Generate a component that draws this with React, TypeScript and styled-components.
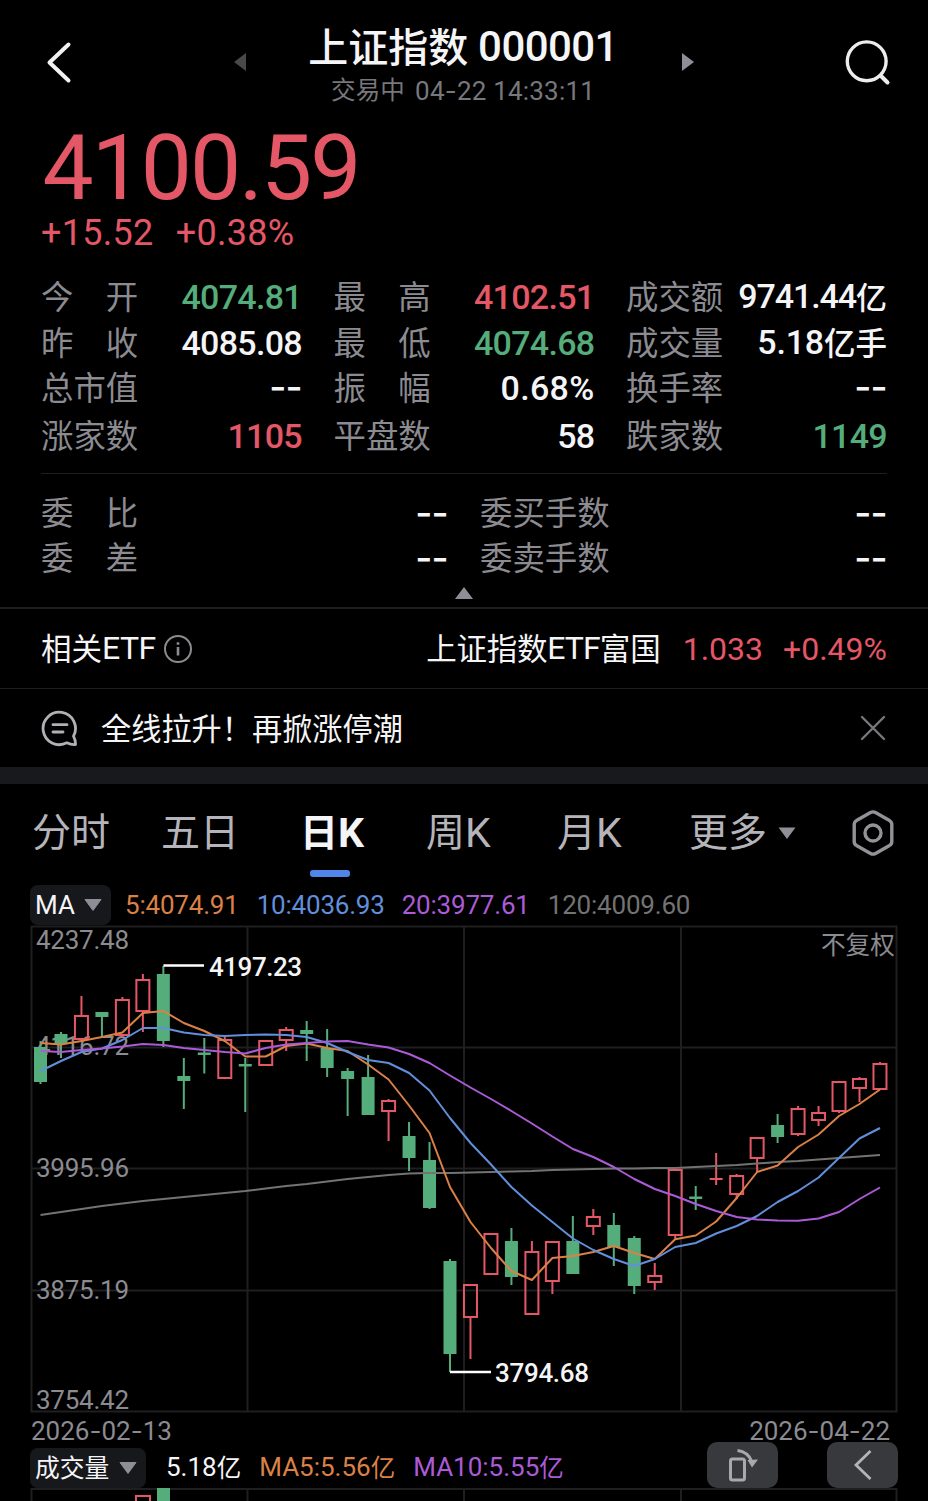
import React from "react";
import styled, { createGlobalStyle } from "styled-components";

const c = {
  red: "#e45766",
  green: "#55ad7c",
  white: "#f5f5f7",
  label: "#8b8b91",
  dim: "#77777d",
  tab: "#b5b4bb",
  line: "#1e1e20",
  orange: "#db8146",
  blue: "#628fdc",
  purple: "#ac5bd8",
  grey: "#737373",
};

const GlobalStyle = createGlobalStyle`
  html, body { margin: 0; background: #000; }
  * { box-sizing: border-box; }
  svg { display: block; flex: none; }
`;

const fonts = `Roboto, "Noto Sans CJK SC", sans-serif`;

const Screen = styled.main`
  width: 928px;
  height: 1501px;
  overflow: hidden;
  background: #000;
  color: ${c.white};
  font-family: ${fonts};
  display: flex;
  flex-direction: column;
`;

const Txt = styled.span<{ $s: number; $c?: string; $w?: number; $ls?: number; $ml?: number }>`
  font-size: ${(p) => p.$s}px;
  color: ${(p) => p.$c ?? c.white};
  font-weight: ${(p) => p.$w ?? 400};
  letter-spacing: ${(p) => p.$ls ?? 0}px;
  margin-left: ${(p) => p.$ml ?? 0}px;
  white-space: pre;
`;

/* Latin hyphens are drawn wide, the way the numeric face has them */
const Dash = styled.span`
  font-family: Inter, sans-serif;
`;
const EmptyValue = styled.span`
  font-family: Inter, sans-serif;
  font-size: 37px;
  line-height: 40px;
  padding-bottom: 3px;
  display: inline-block;
`;

const Han = styled.span<{ $s: number; $ls?: number }>`
  font-size: ${(p) => p.$s}px;
  letter-spacing: ${(p) => p.$ls ?? 0}px;
  vertical-align: -1px;
`;

/* ---------- header ---------- */
const Header = styled.header`
  display: grid;
  grid-template-columns: 234px 12px 1fr 12px 234px;
  align-items: center;
  height: 124px;
  flex: none;
`;
const BackCell = styled.div`
  padding-left: 44px;
`;
const SearchCell = styled.div`
  display: flex;
  justify-content: flex-end;
  padding-right: 36px;
`;
const TitleBlock = styled.div`
  display: flex;
  flex-direction: column;
  align-items: center;
  padding: 7px 2px 0 0;
`;
const Title = styled.h1`
  margin: 0;
  font-size: 42px;
  line-height: 49px;
  letter-spacing: -0.6px;
  font-weight: 500;
  white-space: pre;
`;
const Subtitle = styled.div`
  display: flex;
  font-size: 26px;
  line-height: 36px;
  letter-spacing: 0.2px;
  color: ${c.dim};
  white-space: pre;
`;
const Session = styled.span`
  font-size: 24.5px;
  margin-right: 10px;
`;

/* ---------- price ---------- */
const Price = styled.section`
  height: 150px;
  padding-left: 41px;
  color: ${c.red};
  flex: none;
`;
const Last = styled.div`
  font-size: 91px;
  line-height: 88px;
  letter-spacing: -2px;
  margin-left: 1.5px;
`;
const Change = styled.div`
  display: flex;
  gap: 22px;
  font-size: 36px;
  line-height: 43px;
  letter-spacing: 0.3px;
`;

/* ---------- stats ---------- */
const Stats = styled.section`
  display: grid;
  grid-template-columns: repeat(3, 261px);
  grid-template-rows: 46px 46px 44px 52px;
  column-gap: 31.5px;
  margin: 0 41px;
  padding-bottom: 11px;
  border-bottom: 1px solid ${c.line};
  height: 200px;
  flex: none;
`;
const Orders = styled.section`
  display: grid;
  grid-template-columns: 1fr 1fr;
  grid-template-rows: 45px 45px;
  column-gap: 32px;
  margin: 17px 41px 0;
  flex: none;
`;
const Cell = styled.div`
  display: flex;
  justify-content: space-between;
  align-items: center;
  line-height: 44px;
`;
const Label = styled.span`
  font-size: 32.4px;
  padding-top: 1px;
  color: ${c.label};
  white-space: pre;
`;
const Value = styled.span<{ $tone: string; $ls?: number }>`
  font-size: 34px;
  font-weight: 500;
  letter-spacing: ${(p) => p.$ls ?? -0.7}px;
  color: ${(p) => p.$tone};
  white-space: pre;
`;
const Collapse = styled.div`
  display: flex;
  justify-content: center;
  height: 28px;
  padding-top: 6px;
  border-bottom: 2px solid ${c.line};
  flex: none;
`;

/* ---------- etf / news ---------- */
const Bar = styled.section<{ $h: number; $line?: boolean }>`
  display: flex;
  align-items: center;
  height: ${(p) => p.$h}px;
  padding: 0 41px;
  line-height: 40px;
  border-bottom: ${(p) => (p.$line ? `1px solid ${c.line}` : "0")};
  flex: none;
`;
const Headline = styled.span`
  margin-left: 23px;
  padding-top: 3px;
  font-size: 30.2px;
`;
const Grow = styled.div`
  flex: 1;
`;
const Band = styled.div`
  height: 17px;
  background: #18191d;
  flex: none;
`;

/* ---------- tabs ---------- */
const Tabs = styled.nav`
  display: grid;
  grid-template-columns: 129px 139px 126px 131px 132px 162px 46px;
  padding-left: 32px;
  height: 101px;
  flex: none;
`;
const Tab = styled.div<{ $on?: boolean }>`
  display: flex;
  align-items: center;
  height: 97px;
  font-size: 41px;
  line-height: 60px;
  color: ${(p) => (p.$on ? c.white : c.tab)};
  font-weight: ${(p) => (p.$on ? 700 : 400)};
  position: relative;
  white-space: pre;
`;
const Underline = styled.i`
  position: absolute;
  left: 10px;
  top: 86px;
  width: 40px;
  height: 7px;
  border-radius: 3px;
  background: #5086ea;
`;

/* ---------- indicator rows ---------- */
const Indicators = styled.div`
  display: flex;
  align-items: center;
  height: 40px;
  line-height: 40px;
  padding-left: 30px;
  flex: none;
`;
const Pill = styled.div<{ $w: number }>`
  display: flex;
  align-items: center;
  justify-content: space-between;
  width: ${(p) => p.$w}px;
  height: 40px;
  padding: 0 9px 0 5px;
  border-radius: 8px;
  background: #17181c;
`;
const Dates = styled.div`
  display: flex;
  justify-content: space-between;
  height: 35px;
  padding: 0 38px 0 31px;
  line-height: 35px;
  flex: none;
`;
const FloatButtons = styled.div`
  display: flex;
  gap: 49.5px;
  margin: -6px 30px 0 auto;
`;
const FloatButton = styled.button`
  display: flex;
  align-items: center;
  justify-content: center;
  width: 70.7px;
  height: 46px;
  padding: 0;
  border: 0;
  border-radius: 10px;
  background: #38393d;
`;

/* ---------- icons ---------- */
const Down = () => (
  <svg width="18" height="12" viewBox="0 0 18 12">
    <path d="M1 0.5H17L9 11.5Z" fill="#8f8e97" stroke="#8f8e97" strokeWidth="1" strokeLinejoin="round" />
  </svg>
);

/* ---------- chart data: [type, high, bodyTop, bodyBottom, low] ---------- */
type Candle = ["r" | "g", number, number, number, number];
const candles: Candle[] = [
  ["g", 1041, 1047, 1082, 1084],
  ["g", 1032, 1034, 1044, 1058],
  ["r", 996, 1015, 1040, 1042],
  ["g", 1012, 1012, 1017, 1037],
  ["r", 997, 999, 1036, 1037],
  ["r", 974, 979, 1012, 1032],
  ["g", 966, 974, 1041, 1047],
  ["g", 1058, 1076, 1081, 1109],
  ["g", 1038, 1052.5, 1055, 1073.5],
  ["r", 1037, 1039, 1079, 1079],
  ["g", 1058, 1064, 1066.5, 1112],
  ["r", 1040, 1040, 1066, 1066],
  ["r", 1027, 1029, 1041, 1051],
  ["g", 1021, 1030, 1034, 1061],
  ["g", 1029, 1048, 1068, 1077],
  ["g", 1068, 1071, 1079, 1116],
  ["g", 1055, 1077, 1115, 1115],
  ["r", 1099, 1100, 1112, 1141],
  ["g", 1122, 1136, 1158, 1171],
  ["g", 1142, 1160, 1208, 1209],
  ["g", 1259, 1261, 1354, 1372],
  ["r", 1284, 1284, 1318, 1359],
  ["r", 1233, 1233, 1275, 1275],
  ["g", 1228, 1241, 1277, 1285],
  ["r", 1241, 1251, 1315, 1315],
  ["r", 1241, 1241, 1282, 1294],
  ["g", 1216, 1241, 1274, 1274],
  ["r", 1209, 1216, 1227, 1235],
  ["g", 1213, 1225, 1247, 1266],
  ["g", 1236, 1238, 1286, 1294],
  ["r", 1263, 1275, 1283, 1290],
  ["r", 1169, 1169, 1236, 1240],
  ["g", 1186, 1196.5, 1199, 1210],
  ["r", 1153, 1178, 1180, 1185],
  ["r", 1174, 1175, 1195, 1199],
  ["r", 1137, 1137, 1159, 1172],
  ["g", 1114, 1125, 1137, 1143],
  ["r", 1106, 1108, 1135, 1136],
  ["r", 1106, 1112, 1121, 1126],
  ["r", 1081, 1081, 1112, 1113],
  ["r", 1077, 1078, 1089, 1102],
  ["r", 1062, 1063, 1090, 1090],
];
const ma5 = [1043, 1044.5, 1041, 1037, 1032.5, 1013, 1011, 1023, 1031, 1041, 1056.5, 1056.5, 1046, 1043.5, 1048, 1051, 1064.5, 1079.5, 1105.5, 1133, 1187, 1222, 1248, 1271, 1280, 1258, 1256, 1252, 1246, 1253, 1259, 1239.3, 1235.5, 1221.5, 1198, 1172, 1165.5, 1147, 1134.5, 1116, 1104, 1089.5];
const ma10 = [1071, 1061, 1052, 1048.5, 1040, 1028, 1028, 1032.5, 1035, 1036, 1035, 1034.5, 1035, 1037, 1043, 1052, 1060, 1063, 1073, 1090.5, 1118, 1143, 1164.5, 1187, 1205.5, 1222, 1238.5, 1250, 1259, 1266, 1259, 1247, 1243, 1233.5, 1226, 1216, 1202, 1191, 1177.5, 1158, 1138.5, 1128];
const ma20 = [1051, 1052, 1050, 1048.5, 1046.5, 1044, 1045, 1048, 1050, 1052, 1053.5, 1048, 1044.5, 1043, 1041.5, 1041, 1044.5, 1047.5, 1054, 1063, 1075.5, 1087.5, 1099, 1111, 1123.5, 1136.5, 1149, 1157, 1167, 1179, 1189, 1196, 1204, 1211, 1217, 1219.5, 1220.5, 1220.7, 1218.5, 1212, 1199, 1187.5];
const ma120 = [1215, 1212, 1209, 1206, 1203.5, 1201, 1199, 1197, 1195, 1193, 1191, 1188.5, 1186, 1184, 1181.5, 1179, 1177, 1175, 1173.5, 1173, 1173, 1172.5, 1172, 1171.5, 1171, 1170, 1169.5, 1169, 1168.5, 1168.5, 1168, 1168, 1167, 1166, 1165, 1163.5, 1162, 1161, 1159.5, 1158, 1156.5, 1155];

const cx = (i: number) => 40.5 + i * 20.475;
const points = (ys: number[]) => ys.map((y, i) => `${cx(i).toFixed(1)},${y}`).join(" ");

const Grid = styled.g`
  stroke: #1f1f21;
  stroke-width: 2;
  fill: none;
`;
const AxisText = styled.text`
  font: 400 26px ${fonts};
  fill: ${c.label};
`;
const AdjustText = styled.text`
  font: 400 24.6px ${fonts};
  fill: ${c.label};
`;
const MarkText = styled.text`
  font: 500 26px ${fonts};
  fill: ${c.white};
`;

const KChart = () => (
  <svg width="928" height="488" viewBox="0 925 928 488">
    <Grid>
      <path d="M31.5 926.5H896.5V1411.5H31.5Z" />
      <path d="M32 1047.5H896M32 1168.5H896M32 1290.5H896M247.5 926V1411M464 926V1411M681 926V1411" />
    </Grid>
    <AxisText x="36" y="949" textLength="93">4237.48</AxisText>
    <AxisText x="36" y="1055" textLength="93">4116.72</AxisText>
    <AxisText x="36" y="1177" textLength="93">3995.96</AxisText>
    <AxisText x="36" y="1299" textLength="93">3875.19</AxisText>
    <AxisText x="36" y="1409" textLength="93">3754.42</AxisText>
    <AdjustText x="821" y="954">不复权</AdjustText>
    {candles.map(([t, hi, top, bot, lo], i) => {
      const x = cx(i);
      const thin = bot - top < 3;
      if (t === "g" || thin) {
        const col = t === "g" ? c.green : c.red;
        return (
          <g key={i} fill={col}>
            <rect x={x - 1} y={hi} width="2" height={lo - hi} />
            <rect x={x - 6.5} y={top} width="13" height={bot - top} />
          </g>
        );
      }
      return (
        <g key={i} stroke={c.red} strokeWidth="2" fill="none">
          <path d={`M${x} ${hi}V${top}M${x} ${bot}V${lo}`} />
          <rect x={x - 6.5} y={top + 1} width="13" height={bot - top - 2} />
        </g>
      );
    })}
    <g fill="none" strokeWidth="2" strokeLinejoin="round">
      <polyline points={points(ma120)} stroke={c.grey} />
      <polyline points={points(ma5)} stroke={c.orange} />
      <polyline points={points(ma10)} stroke={c.blue} />
      <polyline points={points(ma20)} stroke={c.purple} />
    </g>
    <path d="M163.4 965.5H204M450 1372H491" stroke="#fff" strokeWidth="2.4" />
    <MarkText x="209" y="976" textLength="93">4197.23</MarkText>
    <MarkText x="495" y="1382" textLength="94">3794.68</MarkText>
  </svg>
);

const VolumeChart = () => (
  <svg width="928" height="13" viewBox="0 1488 928 13">
    <Grid>
      <path d="M31.5 1510V1489H896.5V1510M247.5 1488V1501M464 1488V1501M681 1488V1501" />
    </Grid>
    <rect x="136" y="1496" width="14" height="20" fill="none" stroke={c.red} strokeWidth="2" />
    <rect x="157" y="1488" width="13" height="13" fill={c.green} />
  </svg>
);

/* ---------- quote data: [label, value, colour, letter spacing] ---------- */
const dashes = <EmptyValue>--</EmptyValue>;
const stats: [string, React.ReactNode, string, number?][] = [
  ["今　开", "4074.81", c.green],
  ["最　高", "4102.51", c.red],
  ["成交额", <>9741.44<Han $s={31}>亿</Han></>, c.white, -1.1],
  ["昨　收", "4085.08", c.white],
  ["最　低", "4074.68", c.green],
  ["成交量", <>5.18<Han $s={31.5}>亿手</Han></>, c.white, -0.2],
  ["总市值", dashes, c.white],
  ["振　幅", "0.68%", c.white, 0.3],
  ["换手率", dashes, c.white],
  ["涨家数", "1105", c.red],
  ["平盘数", "58", c.white],
  ["跌家数", "1149", c.green],
];
const orders = ["委　比", "委买手数", "委　差", "委卖手数"];

export default function App() {
  return (
    <Screen>
      <GlobalStyle />
      <Header>
        <BackCell>
          <svg width="30" height="44" viewBox="0 0 30 44" fill="none" stroke="#f2f2f4" strokeWidth="4" strokeLinecap="round" strokeLinejoin="round">
            <path d="M24.5 4.5L5.5 22.5L24.5 40.5" />
          </svg>
        </BackCell>
        <svg width="12" height="18" viewBox="0 0 12 18"><path d="M12 0V18L0 9Z" fill="#49494b" /></svg>
        <TitleBlock>
          <Title><Han $s={40}>上证指数</Han> 000001</Title>
          <Subtitle><Session>交易中</Session><span>04<Dash>-</Dash>22 14:33:11</span></Subtitle>
        </TitleBlock>
        <svg width="12" height="18" viewBox="0 0 12 18"><path d="M0 0V18L12 9Z" fill="#8f8e98" /></svg>
        <SearchCell>
          <svg width="48" height="48" viewBox="0 0 48 48" fill="none" stroke="#ededf0" strokeLinecap="round">
            <circle cx="22.7" cy="23.3" r="19.4" strokeWidth="3.4" />
            <path d="M37 38L43.500 44.500" strokeWidth="4" />
          </svg>
        </SearchCell>
      </Header>

      <Price>
        <Last>4100.59</Last>
        <Change><span>+15.52</span><span>+0.38%</span></Change>
      </Price>

      <Stats>
        {stats.map(([label, value, tone, ls]) => (
          <Cell key={label}>
            <Label>{label}</Label>
            <Value $tone={tone} $ls={ls}>{value}</Value>
          </Cell>
        ))}
      </Stats>
      <Orders>
        {orders.map((label) => (
          <Cell key={label}>
            <Label>{label}</Label>
            <Value $tone={c.white}>{dashes}</Value>
          </Cell>
        ))}
      </Orders>
      <Collapse>
        <svg width="18" height="12" viewBox="0 0 18 12"><path d="M9 0L18 12H0Z" fill="#8f8e97" /></svg>
      </Collapse>

      <Bar $h={80} $line>
        <Txt $s={32} $ls={-0.6}><Han $s={30.5}>相关</Han>ETF</Txt>
        <svg width="30" height="30" viewBox="0 0 30 30" fill="none" stroke="#8b8b90" style={{ marginLeft: 8 }}>
          <circle cx="15" cy="15" r="13" strokeWidth="2" />
          <path d="M15 13V21.5M15 8.2V10.8" strokeWidth="2.6" />
        </svg>
        <Grow />
        <Txt $s={32} $ls={-1}><Han $s={30.5} $ls={-0.2}>上证指数</Han>ETF<Han $s={30.5}>富国</Han></Txt>
        <Txt $s={32} $c={c.red} $ml={22}>1.033</Txt>
        <Txt $s={32} $c={c.red} $ml={20}>+0.49%</Txt>
      </Bar>
      <Bar $h={78}>
        <svg width="37" height="37" viewBox="0 0 37 37" fill="none" stroke="#b0b0b5" strokeWidth="2.8" strokeLinecap="round" strokeLinejoin="round">
          <path d="M32.5 26.2A16.2 16.2 0 1 0 25.8 32.8Q30 34.8 34.5 34.5Q34.7 30.5 32.5 26.2Z" />
          <path d="M12 14.7H26M12 22H22" />
        </svg>
        <Headline>全线拉升！再掀涨停潮</Headline>
        <Grow />
        <svg width="28" height="28" viewBox="0 0 28 28" fill="none" stroke="#77777c" strokeWidth="2.4" strokeLinecap="round">
          <path d="M3 3L25 25M25 3L3 25" />
        </svg>
      </Bar>
      <Band />

      <Tabs>
        <Tab><Han $s={39}>分时</Han></Tab>
        <Tab><Han $s={39}>五日</Han></Tab>
        <Tab $on><Han $s={38}>日</Han>K<Underline /></Tab>
        <Tab><Han $s={39}>周</Han>K</Tab>
        <Tab><Han $s={39}>月</Han>K</Tab>
        <Tab><Han $s={39}>更多</Han><svg width="18" height="12" viewBox="0 0 18 12" style={{ marginLeft: 11 }}><path d="M0.5 0.5H17.5L9 12Z" fill="#8f8e97" /></svg></Tab>
        <Tab>
          <svg width="44" height="48" viewBox="0 0 44 48" fill="none" stroke="#929297" strokeWidth="3.4" strokeLinejoin="round">
            <path d="M19.5 3.6Q22 2.2 24.5 3.6L38.5 11.6Q40.8 13 40.8 15.6V32.4Q40.8 35 38.5 36.4L24.5 44.4Q22 45.8 19.5 44.4L5.500 36.4Q3.200 35 3.200 32.4V15.600Q3.200 13 5.500 11.600Z" />
            <circle cx="22" cy="24" r="8" />
          </svg>
        </Tab>
      </Tabs>

      <Indicators>
        <Pill $w={81}><Txt $s={26}>MA</Txt><Down /></Pill>
        <Txt $s={26} $ls={-0.2} $c={c.orange} $ml={14}>5:4074.91</Txt>
        <Txt $s={26} $ls={-0.2} $c={c.blue} $ml={18}>10:4036.93</Txt>
        <Txt $s={26} $ls={-0.2} $c={c.purple} $ml={17}>20:3977.61</Txt>
        <Txt $s={26} $ls={-0.2} $c={c.grey} $ml={18}>120:4009.60</Txt>
      </Indicators>
      <KChart />
      <Dates>
        <Txt $s={26} $c={c.label}>2026<Dash>-</Dash>02<Dash>-</Dash>13</Txt>
        <Txt $s={26} $c={c.label}>2026<Dash>-</Dash>04<Dash>-</Dash>22</Txt>
      </Dates>
      <Indicators>
        <Pill $w={116}><Txt $s={24.8}><Han $s={24.8}>成交量</Han></Txt><Down /></Pill>
        <Txt $s={26} $ml={20}>5.18<Han $s={24.5}>亿</Han></Txt>
        <Txt $s={26} $c={c.orange} $ml={18}>MA5:5.56<Han $s={24.5}>亿</Han></Txt>
        <Txt $s={26} $c={c.purple} $ml={18}>MA10:5.55<Han $s={24.5}>亿</Han></Txt>
        <FloatButtons>
          <FloatButton>
            <svg width="32" height="36" viewBox="0 0 32 36" fill="none" stroke="#a9a9ad" strokeWidth="3">
              <rect x="4.500" y="12" width="14" height="21" rx="2" />
              <path d="M11.500 3.500Q22 5 25.500 14" />
              <path d="M21.500 13L32 12.500L26 20.500Z" fill="#a9a9ad" stroke="none" />
            </svg>
          </FloatButton>
          <FloatButton>
            <svg width="20" height="32" viewBox="0 0 20 32" fill="none" stroke="#b4b4b8" strokeWidth="2.800">
              <path d="M17.500 2L3 16L17.500 30" />
            </svg>
          </FloatButton>
        </FloatButtons>
      </Indicators>
      <VolumeChart />
    </Screen>
  );
}
